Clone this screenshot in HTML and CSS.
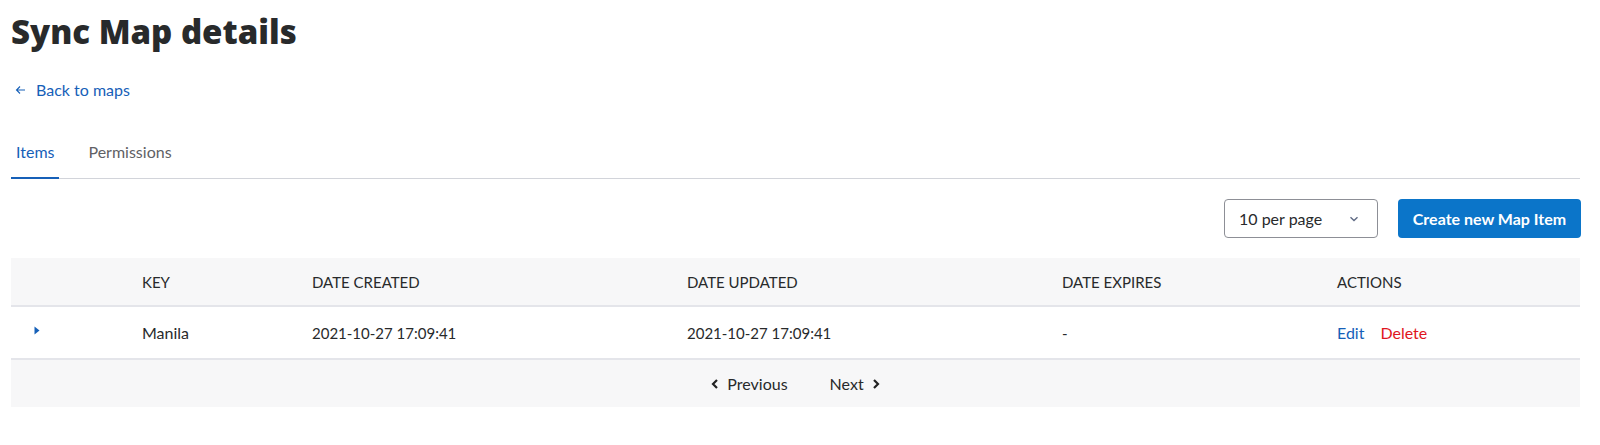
FILE: index.html
```html
<!DOCTYPE html>
<html lang="en">
<head>
<meta charset="utf-8">
<title>Sync Map details</title>
<link rel="stylesheet" href="styles.css">
</head>
<body>
<div class="page">
  <h1 class="title">Sync Map details</h1>
  <a class="back" href="#"><svg class="back-icon" width="11" height="10" viewBox="0 0 11 10"><path d="M10 5H1.5M5 1.5L1.5 5 5 8.5" fill="none" stroke="currentColor" stroke-width="1.1"/></svg><span>Back to maps</span></a>
  <nav class="tabs">
    <a class="tab active" href="#">Items</a>
    <a class="tab" href="#">Permissions</a>
  </nav>
  <div class="toolbar">
    <div class="select"><span>10 per page</span><svg width="10" height="6" viewBox="0 0 10 6"><path d="M1.5 1.2L5 4.5l3.5-3.3" fill="none" stroke="#606b85" stroke-width="1.4"/></svg></div>
    <button class="btn-primary">Create new Map Item</button>
  </div>
  <div class="table">
    <div class="row head">
      <div class="cell"></div>
      <div class="cell">KEY</div>
      <div class="cell">DATE CREATED</div>
      <div class="cell">DATE UPDATED</div>
      <div class="cell">DATE EXPIRES</div>
      <div class="cell">ACTIONS</div>
    </div>
    <div class="row body">
      <div class="cell expand"><svg width="6" height="9" viewBox="0 0 6 9"><path d="M0.5 0.5L5.5 4.5L0.5 8.5Z" fill="#1660b8"/></svg></div>
      <div class="cell key">Manila</div>
      <div class="cell">2021-10-27 17:09:41</div>
      <div class="cell">2021-10-27 17:09:41</div>
      <div class="cell">-</div>
      <div class="cell actions"><a class="link-edit" href="#">Edit</a><a class="link-delete" href="#">Delete</a></div>
    </div>
    <div class="pager">
      <a class="pager-btn" href="#"><svg width="8" height="10" viewBox="0 0 8 10"><path d="M6 1L2 5l4 4" fill="none" stroke="#222" stroke-width="2.2"/></svg><span>Previous</span></a>
      <a class="pager-btn" href="#"><span>Next</span><svg width="8" height="10" viewBox="0 0 8 10"><path d="M2 1l4 4-4 4" fill="none" stroke="#222" stroke-width="2.2"/></svg></a>
    </div>
  </div>
</div>
</body>
</html>
```

FILE: styles.css
```css
* { box-sizing: border-box; }
html, body { margin: 0; background: #fff; }
body {
  font-family: Lato, "Open Sans", "Liberation Sans", sans-serif;
  color: #282a2b;
}
a { text-decoration: none; }
.page {
  padding: 10px 20px 0 11px;
}
.title {
  margin: 0;
  font-family: "Open Sans", Lato, sans-serif;
  font-size: 33px;
  line-height: 44px;
  font-weight: 800;
  color: #282a2b;
}
.back {
  display: inline-flex;
  align-items: center;
  gap: 10px;
  margin: 26px 0 0 4px;
  font-size: 16px;
  line-height: 20px;
  color: #1660b8;
}
.back-icon { display: block; }
.tabs {
  display: flex;
  gap: 24px;
  margin-top: 32px;
  border-bottom: 1px solid #d2d4da;
  height: 47px;
}
.tab {
  display: block;
  padding: 10px 5px 0 5px;
  font-size: 16px;
  line-height: 20px;
  color: #5f6165;
  margin-bottom: -1px;
}
.tab.active {
  color: #1660b8;
  border-bottom: 2px solid #1660b8;
}
.toolbar {
  display: flex;
  justify-content: flex-end;
  gap: 20px;
  margin-top: 20px;
  margin-right: -1px;
}
.select {
  width: 154px;
  height: 39px;
  border: 1px solid #8d8f96;
  border-radius: 4px;
  display: flex;
  align-items: center;
  justify-content: space-between;
  padding: 0 18px 0 14px;
  font-size: 16px;
  color: #282a2b;
}
.select svg { display: block; }
.btn-primary {
  width: 183px;
  height: 39px;
  border: 0;
  border-radius: 4px;
  background: #0b75c9;
  color: #fff;
  font-family: inherit;
  font-size: 16px;
  font-weight: 700;
  padding: 0;
}
.table {
  margin-top: 20px;
  font-size: 15px;
  color: #282a2b;
}
.row {
  display: grid;
  grid-template-columns: 119px 170px 375px 375px 275px 1fr;
  align-items: center;
}
.cell { padding-left: 12px; }
.head {
  height: 49px;
  background: #f7f7f8;
  border-bottom: 2px solid #e4e5ea;
}
.body {
  height: 53px;
  border-bottom: 2px solid #e4e5ea;
}
.key { font-size: 16px; }
.expand {
  padding-left: 23px;
  align-self: start;
  padding-top: 19px;
}
.expand svg { display: block; }
.actions { display: flex; gap: 16px; font-size: 16px; }
.link-edit { color: #1660b8; }
.link-delete { color: #e0161e; }
.pager {
  height: 47px;
  background: #f7f7f8;
  display: flex;
  justify-content: center;
  align-items: center;
  gap: 42px;
}
.pager-btn {
  display: flex;
  align-items: center;
  gap: 8px;
  color: #282a2b;
  font-size: 16px;
}
.pager-btn svg { display: block; }
```
